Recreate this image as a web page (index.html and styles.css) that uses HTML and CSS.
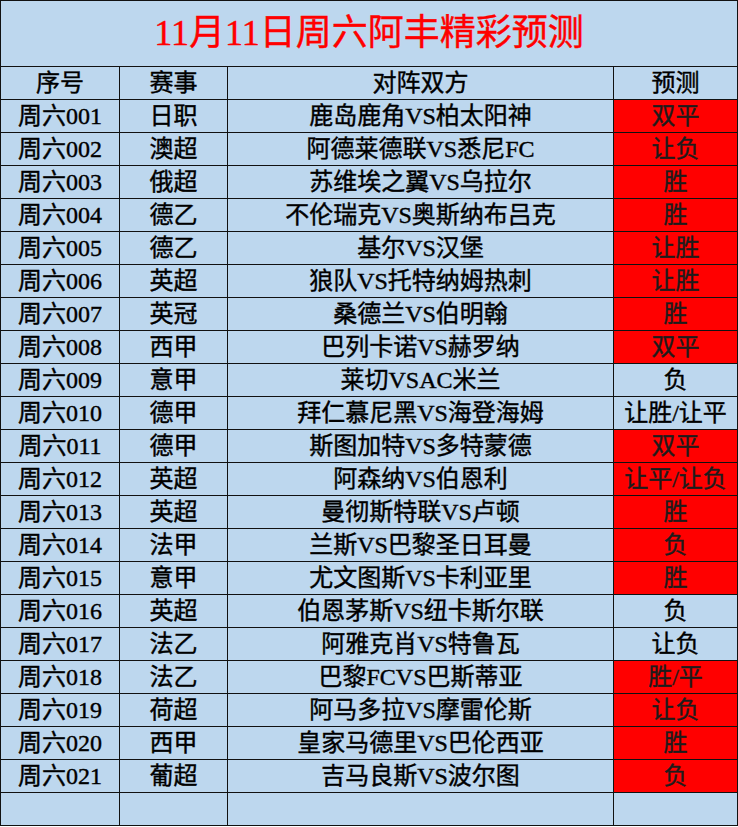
FILE: index.html
```html
<!DOCTYPE html>
<html lang="zh-CN">
<head>
<meta charset="utf-8">
<title>11月11日周六阿丰精彩预测</title>
<link rel="stylesheet" href="styles.css">
</head>
<body>
<table class="sheet">
  <colgroup>
    <col class="c-no">
    <col class="c-league">
    <col class="c-match">
    <col class="c-pick">
  </colgroup>
  <tr class="title-row"><td colspan="4" class="title">11月11日周六阿丰精彩预测</td></tr>
  <tr class="head"><td>序号</td><td>赛事</td><td>对阵双方</td><td>预测</td></tr>
  <tr><td>周六001</td><td>日职</td><td>鹿岛鹿角VS柏太阳神</td><td class="hot">双平</td></tr>
  <tr><td>周六002</td><td>澳超</td><td>阿德莱德联VS悉尼FC</td><td class="hot">让负</td></tr>
  <tr><td>周六003</td><td>俄超</td><td>苏维埃之翼VS乌拉尔</td><td class="hot">胜</td></tr>
  <tr><td>周六004</td><td>德乙</td><td>不伦瑞克VS奥斯纳布吕克</td><td class="hot">胜</td></tr>
  <tr><td>周六005</td><td>德乙</td><td>基尔VS汉堡</td><td class="hot">让胜</td></tr>
  <tr><td>周六006</td><td>英超</td><td>狼队VS托特纳姆热刺</td><td class="hot">让胜</td></tr>
  <tr><td>周六007</td><td>英冠</td><td>桑德兰VS伯明翰</td><td class="hot">胜</td></tr>
  <tr><td>周六008</td><td>西甲</td><td>巴列卡诺VS赫罗纳</td><td class="hot">双平</td></tr>
  <tr><td>周六009</td><td>意甲</td><td>莱切VSAC米兰</td><td>负</td></tr>
  <tr><td>周六010</td><td>德甲</td><td>拜仁慕尼黑VS海登海姆</td><td>让胜/让平</td></tr>
  <tr><td>周六011</td><td>德甲</td><td>斯图加特VS多特蒙德</td><td class="hot">双平</td></tr>
  <tr><td>周六012</td><td>英超</td><td>阿森纳VS伯恩利</td><td class="hot">让平/让负</td></tr>
  <tr><td>周六013</td><td>英超</td><td>曼彻斯特联VS卢顿</td><td class="hot">胜</td></tr>
  <tr><td>周六014</td><td>法甲</td><td>兰斯VS巴黎圣日耳曼</td><td class="hot">负</td></tr>
  <tr><td>周六015</td><td>意甲</td><td>尤文图斯VS卡利亚里</td><td class="hot">胜</td></tr>
  <tr><td>周六016</td><td>英超</td><td>伯恩茅斯VS纽卡斯尔联</td><td>负</td></tr>
  <tr><td>周六017</td><td>法乙</td><td>阿雅克肖VS特鲁瓦</td><td>让负</td></tr>
  <tr><td>周六018</td><td>法乙</td><td>巴黎FCVS巴斯蒂亚</td><td class="hot">胜/平</td></tr>
  <tr><td>周六019</td><td>荷超</td><td>阿马多拉VS摩雷伦斯</td><td class="hot">让负</td></tr>
  <tr><td>周六020</td><td>西甲</td><td>皇家马德里VS巴伦西亚</td><td class="hot">胜</td></tr>
  <tr><td>周六021</td><td>葡超</td><td>吉马良斯VS波尔图</td><td class="hot">负</td></tr>
  <tr><td></td><td></td><td></td><td></td></tr>
</table>
</body>
</html>
```
FILE: styles.css
```css
html, body {
  margin: 0;
  padding: 0;
  background: #ffffff;
}
.sheet {
  border-collapse: collapse;
  table-layout: fixed;
  width: 737px;
  background: #bdd7ee;
  font-family: "Liberation Serif", "Noto Sans CJK SC", serif;
  font-size: 24px;
  font-weight: 400;
  color: #000;
  -webkit-text-stroke: 0.4px currentColor;
}
.c-no { width: 119px; }
.c-league { width: 108px; }
.c-match { width: 386px; }
.c-pick { width: 124px; }
.sheet td {
  border: 1px solid #111;
  height: 32px;
  padding: 0;
  text-align: center;
  vertical-align: middle;
  line-height: 32px;
  white-space: nowrap;
  overflow: hidden;
}
.sheet .title-row td {
  height: 65px;
  line-height: 65px;
}
.title {
  color: #ff0000;
  font-size: 36px;
  padding-top: 4px;
}
.sheet td.hot {
  background: #ff0000;
  color: #1c1c1c;
}
```
